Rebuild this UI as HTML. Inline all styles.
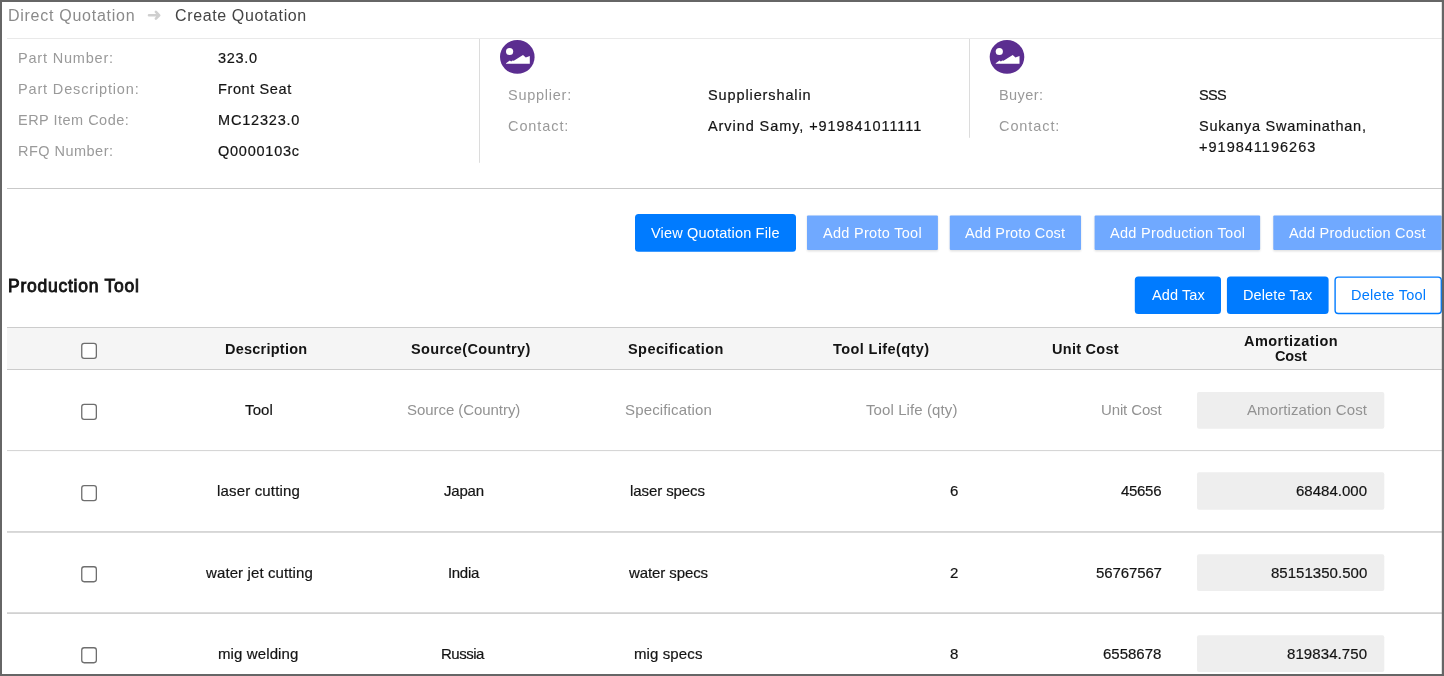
<!DOCTYPE html>
<html><head><meta charset="utf-8">
<style>
*{box-sizing:border-box;margin:0;padding:0}
html,body{width:1444px;height:676px;overflow:hidden;background:#fff}
body{font-family:"Liberation Sans",sans-serif;color:#222;position:relative}
.t{position:absolute;white-space:nowrap;line-height:20px;height:20px;z-index:3;will-change:transform}
.bx{position:absolute}
</style></head><body>

<svg class="bx" style="left:0;top:0" width="1444" height="676" viewBox="0 0 1444 676">
<defs><filter id="b" x="-10%" y="-30%" width="120%" height="160%"><feGaussianBlur stdDeviation="1"/></filter></defs>
<!-- table header background -->
<rect x="7" y="327" width="1435" height="42.5" fill="#f5f5f5"/>
<!-- separators -->
<rect x="7" y="38" width="1435" height="1" fill="#e9e9e9"/>
<rect x="479" y="39" width="1" height="123.8" fill="#dcdcdc"/>
<rect x="969" y="39" width="1" height="98.8" fill="#dcdcdc"/>
<rect x="7" y="188" width="1435" height="1" fill="#c9c9c9"/>
<rect x="7" y="327" width="1435" height="1" fill="#ccc"/>
<rect x="7" y="369" width="1435" height="1" fill="#ccc"/>
<rect x="7" y="450.1" width="1435" height="1" fill="#d2d2d2"/>
<rect x="7" y="531.2" width="1435" height="1.5" fill="#ccc"/>
<rect x="7" y="612.3" width="1435" height="1.6" fill="#ccc"/>
<!-- breadcrumb arrow -->
<path transform="translate(146,8)" d="M3 7.3H12.5M9.9 3.9L13.2 7.3L9.9 10.6" fill="none" stroke="#cfcfcf" stroke-width="2.6" stroke-linecap="round" stroke-linejoin="round"/>
<!-- avatars -->
<g transform="translate(500,39.5)"><ellipse cx="17.3" cy="17.4" rx="17.3" ry="16.95" fill="#5b2d90"/><circle cx="9.6" cy="12" r="3.6" fill="#fff"/><path d="M6 24.3 L6 23.8 L9.8 21.1 L11.2 21.9 L12.6 20.9 L13.8 21.2 L23 15.4 L25.8 17.9 L29.8 16.5 L29.8 24.3 Z" fill="#fff"/></g>
<g transform="translate(989.7,39.5)"><ellipse cx="17.3" cy="17.4" rx="17.3" ry="16.95" fill="#5b2d90"/><circle cx="9.6" cy="12" r="3.6" fill="#fff"/><path d="M6 24.3 L6 23.8 L9.8 21.1 L11.2 21.9 L12.6 20.9 L13.8 21.2 L23 15.4 L25.8 17.9 L29.8 16.5 L29.8 24.3 Z" fill="#fff"/></g>
<!-- buttons -->
<rect x="635" y="214.1" width="161" height="37.7" rx="3.5" fill="#007bff"/>
<rect x="807" y="216.2" width="130.90" height="35" rx="1" fill="#000" opacity=".13" filter="url(#b)"/><rect x="807" y="215.4" width="130.90" height="34.5" rx="1" fill="#70a9ff"/>
<rect x="949.8" y="216.2" width="131.20" height="35" rx="1" fill="#000" opacity=".13" filter="url(#b)"/><rect x="949.8" y="215.4" width="131.20" height="34.5" rx="1" fill="#70a9ff"/>
<rect x="1094.6" y="216.2" width="165.50" height="35" rx="1" fill="#000" opacity=".13" filter="url(#b)"/><rect x="1094.6" y="215.4" width="165.50" height="34.5" rx="1" fill="#70a9ff"/>
<rect x="1273.3" y="216.2" width="168.30" height="35" rx="1" fill="#000" opacity=".13" filter="url(#b)"/><rect x="1273.3" y="215.4" width="168.30" height="34.5" rx="1" fill="#70a9ff"/>
<rect x="1134.8" y="276.6" width="86.2" height="37.3" rx="3.5" fill="#007bff"/>
<rect x="1226.9" y="276.6" width="101.7" height="37.3" rx="3.5" fill="#007bff"/>
<rect x="1335.1" y="277.1" width="106.2" height="36.4" rx="3.2" fill="#fff" stroke="#007bff" stroke-width="1.4"/>
<!-- checkboxes -->
<rect x="81.75" y="343.35" width="14.6" height="15" rx="2.4" fill="#fff" stroke="#6e6e6e" stroke-width="1.3"/>
<rect x="81.75" y="404.45" width="14.6" height="15" rx="2.4" fill="#fff" stroke="#6e6e6e" stroke-width="1.3"/>
<rect x="81.75" y="485.65" width="14.6" height="15" rx="2.4" fill="#fff" stroke="#6e6e6e" stroke-width="1.3"/>
<rect x="81.75" y="566.75" width="14.6" height="15" rx="2.4" fill="#fff" stroke="#6e6e6e" stroke-width="1.3"/>
<rect x="81.75" y="647.75" width="14.6" height="15" rx="2.4" fill="#fff" stroke="#6e6e6e" stroke-width="1.3"/>
<!-- readonly inputs -->
<rect x="1197" y="392" width="187.3" height="36.80" rx="2" fill="#eeeeee"/>
<rect x="1197" y="472.3" width="187.3" height="37.50" rx="2" fill="#eeeeee"/>
<rect x="1197" y="554.2" width="187.3" height="36.90" rx="2" fill="#eeeeee"/>
<rect x="1197" y="635.2" width="187.3" height="36.90" rx="2" fill="#eeeeee"/>
<!-- outer frame -->
<path d="M0 0H1444V676H0Z M2 2V674H1441.8V2Z" fill="#666" fill-rule="evenodd"/>
</svg>

<div class="t" style="left:8.00px;top:5.86px;font-size:16px;color:#8a8a8a;letter-spacing:0.728px;">Direct Quotation</div>
<div class="t" style="left:175.00px;top:5.86px;font-size:16px;color:#444;letter-spacing:0.628px;">Create Quotation</div>
<div class="t" style="left:18.00px;top:47.78px;font-size:14.5px;color:#9a9a9a;letter-spacing:0.811px;">Part Number:</div>
<div class="t" style="left:218.00px;top:47.78px;font-size:14.5px;color:#141414;letter-spacing:0.708px;-webkit-text-stroke:0.2px #141414;">323.0</div>
<div class="t" style="left:18.00px;top:78.78px;font-size:14.5px;color:#9a9a9a;letter-spacing:0.845px;">Part Description:</div>
<div class="t" style="left:218.00px;top:78.78px;font-size:14.5px;color:#141414;letter-spacing:0.611px;-webkit-text-stroke:0.2px #141414;">Front Seat</div>
<div class="t" style="left:18.00px;top:109.88px;font-size:14.5px;color:#9a9a9a;letter-spacing:0.482px;">ERP Item Code:</div>
<div class="t" style="left:218.00px;top:109.88px;font-size:14.5px;color:#141414;letter-spacing:0.804px;-webkit-text-stroke:0.2px #141414;">MC12323.0</div>
<div class="t" style="left:18.00px;top:140.88px;font-size:14.5px;color:#9a9a9a;letter-spacing:0.472px;">RFQ Number:</div>
<div class="t" style="left:218.00px;top:140.88px;font-size:14.5px;color:#141414;letter-spacing:0.757px;-webkit-text-stroke:0.2px #141414;">Q0000103c</div>
<div class="t" style="left:508.00px;top:85.28px;font-size:14.5px;color:#9a9a9a;letter-spacing:0.741px;">Supplier:</div>
<div class="t" style="left:708.00px;top:85.28px;font-size:14.5px;color:#141414;letter-spacing:0.887px;-webkit-text-stroke:0.2px #141414;">Suppliershalin</div>
<div class="t" style="left:508.00px;top:116.48px;font-size:14.5px;color:#9a9a9a;letter-spacing:0.909px;">Contact:</div>
<div class="t" style="left:708.00px;top:116.48px;font-size:14.5px;color:#141414;letter-spacing:0.924px;-webkit-text-stroke:0.2px #141414;">Arvind Samy, +919841011111</div>
<div class="t" style="left:999.00px;top:85.28px;font-size:14.5px;color:#9a9a9a;letter-spacing:0.444px;">Buyer:</div>
<div class="t" style="left:1199.00px;top:85.28px;font-size:14.5px;color:#141414;letter-spacing:-0.674px;-webkit-text-stroke:0.2px #141414;">SSS</div>
<div class="t" style="left:999.00px;top:116.48px;font-size:14.5px;color:#9a9a9a;letter-spacing:0.909px;">Contact:</div>
<div class="t" style="left:1199.00px;top:116.48px;font-size:14.5px;color:#141414;letter-spacing:0.767px;-webkit-text-stroke:0.2px #141414;">Sukanya Swaminathan,</div>
<div class="t" style="left:1199.00px;top:137.28px;font-size:14.5px;color:#141414;letter-spacing:1.014px;-webkit-text-stroke:0.2px #141414;">+919841196263</div>
<div class="t" style="left:651.00px;top:222.68px;font-size:14.5px;color:#fff;letter-spacing:0.167px;">View Quotation File</div>
<div class="t" style="left:823.00px;top:222.68px;font-size:14.5px;color:#fff;letter-spacing:0.293px;">Add Proto Tool</div>
<div class="t" style="left:965.00px;top:222.68px;font-size:14.5px;color:#fff;letter-spacing:0.131px;">Add Proto Cost</div>
<div class="t" style="left:1110.00px;top:222.68px;font-size:14.5px;color:#fff;letter-spacing:0.303px;">Add Production Tool</div>
<div class="t" style="left:1289.00px;top:222.68px;font-size:14.5px;color:#fff;letter-spacing:0.191px;">Add Production Cost</div>
<div class="t" style="left:8.00px;top:275.94px;font-size:17.5px;color:#141414;letter-spacing:0.749px;-webkit-text-stroke:0.9px #141414;">Production Tool</div>
<div class="t" style="left:1152.00px;top:285.18px;font-size:14.5px;color:#fff;letter-spacing:0.086px;">Add Tax</div>
<div class="t" style="left:1243.00px;top:285.18px;font-size:14.5px;color:#fff;letter-spacing:0.121px;">Delete Tax</div>
<div class="t" style="left:1351.00px;top:285.18px;font-size:14.5px;color:#007bff;letter-spacing:0.281px;">Delete Tool</div>
<div class="t" style="left:225.00px;top:338.98px;font-size:14.5px;color:#141414;letter-spacing:0.237px;font-weight:bold;">Description</div>
<div class="t" style="left:411.00px;top:338.98px;font-size:14.5px;color:#141414;letter-spacing:0.351px;font-weight:bold;">Source(Country)</div>
<div class="t" style="left:628.00px;top:338.98px;font-size:14.5px;color:#141414;letter-spacing:0.429px;font-weight:bold;">Specification</div>
<div class="t" style="left:833.00px;top:338.98px;font-size:14.5px;color:#141414;letter-spacing:0.414px;font-weight:bold;">Tool Life(qty)</div>
<div class="t" style="left:1052.00px;top:338.98px;font-size:14.5px;color:#141414;letter-spacing:0.278px;font-weight:bold;">Unit Cost</div>
<div class="t" style="left:1244.00px;top:331.08px;font-size:14.5px;color:#141414;letter-spacing:0.454px;font-weight:bold;">Amortization</div>
<div class="t" style="left:1275.00px;top:346.08px;font-size:14.5px;color:#141414;letter-spacing:-0.113px;font-weight:bold;">Cost</div>
<div class="t" style="left:245.00px;top:399.80px;font-size:15px;color:#141414;letter-spacing:0.129px;-webkit-text-stroke:0.2px #141414;">Tool</div>
<div class="t" style="left:407.00px;top:399.80px;font-size:15px;color:#929292;letter-spacing:-0.059px;">Source (Country)</div>
<div class="t" style="left:625.00px;top:399.80px;font-size:15px;color:#929292;letter-spacing:0.146px;">Specification</div>
<div class="t" style="left:866.00px;top:399.80px;font-size:15px;color:#929292;letter-spacing:0.098px;">Tool Life (qty)</div>
<div class="t" style="left:1101.00px;top:399.80px;font-size:15px;color:#929292;letter-spacing:-0.128px;">Unit Cost</div>
<div class="t" style="left:1247.00px;top:399.80px;font-size:15px;color:#929292;letter-spacing:0.096px;">Amortization Cost</div>
<div class="t" style="left:217.00px;top:481.00px;font-size:15px;color:#141414;letter-spacing:0.167px;-webkit-text-stroke:0.2px #141414;">laser cutting</div>
<div class="t" style="left:444.00px;top:481.00px;font-size:15px;color:#141414;letter-spacing:-0.196px;-webkit-text-stroke:0.2px #141414;">Japan</div>
<div class="t" style="left:630.00px;top:481.00px;font-size:15px;color:#141414;letter-spacing:-0.090px;-webkit-text-stroke:0.2px #141414;">laser specs</div>
<div class="t" style="left:950.00px;top:481.00px;font-size:15px;color:#141414;letter-spacing:0.500px;-webkit-text-stroke:0.2px #141414;">6</div>
<div class="t" style="left:1121.00px;top:481.00px;font-size:15px;color:#141414;letter-spacing:-0.305px;-webkit-text-stroke:0.2px #141414;">45656</div>
<div class="t" style="left:1296.00px;top:481.00px;font-size:15px;color:#141414;letter-spacing:0.010px;-webkit-text-stroke:0.2px #141414;">68484.000</div>
<div class="t" style="left:206.00px;top:563.00px;font-size:15px;color:#141414;letter-spacing:0.109px;-webkit-text-stroke:0.2px #141414;">water jet cutting</div>
<div class="t" style="left:448.00px;top:563.00px;font-size:15px;color:#141414;letter-spacing:-0.322px;-webkit-text-stroke:0.2px #141414;">India</div>
<div class="t" style="left:629.00px;top:563.00px;font-size:15px;color:#141414;letter-spacing:-0.091px;-webkit-text-stroke:0.2px #141414;">water specs</div>
<div class="t" style="left:950.00px;top:563.00px;font-size:15px;color:#141414;letter-spacing:0.500px;-webkit-text-stroke:0.2px #141414;">2</div>
<div class="t" style="left:1096.00px;top:563.00px;font-size:15px;color:#141414;letter-spacing:-0.113px;-webkit-text-stroke:0.2px #141414;">56767567</div>
<div class="t" style="left:1271.00px;top:563.00px;font-size:15px;color:#141414;letter-spacing:0.030px;-webkit-text-stroke:0.2px #141414;">85151350.500</div>
<div class="t" style="left:218.00px;top:644.00px;font-size:15px;color:#141414;letter-spacing:0.117px;-webkit-text-stroke:0.2px #141414;">mig welding</div>
<div class="t" style="left:441.00px;top:644.00px;font-size:15px;color:#141414;letter-spacing:-0.508px;-webkit-text-stroke:0.2px #141414;">Russia</div>
<div class="t" style="left:634.00px;top:644.00px;font-size:15px;color:#141414;letter-spacing:0.107px;-webkit-text-stroke:0.2px #141414;">mig specs</div>
<div class="t" style="left:950.00px;top:644.00px;font-size:15px;color:#141414;letter-spacing:0.500px;-webkit-text-stroke:0.2px #141414;">8</div>
<div class="t" style="left:1103.00px;top:644.00px;font-size:15px;color:#141414;-webkit-text-stroke:0.2px #141414;">6558678</div>
<div class="t" style="left:1287.00px;top:644.00px;font-size:15px;color:#141414;letter-spacing:0.087px;-webkit-text-stroke:0.2px #141414;">819834.750</div>
</body></html>
